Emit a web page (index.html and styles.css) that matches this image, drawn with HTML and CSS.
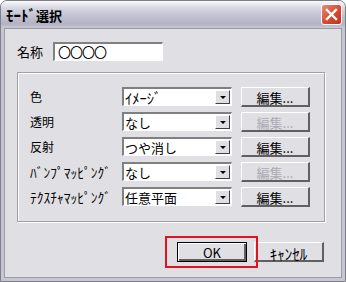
FILE: index.html
```html
<!DOCTYPE html>
<html lang="ja">
<head>
  <meta charset="UTF-8" />
  <title>ﾓｰﾄﾞ選択</title>
  <link rel="stylesheet" href="styles.css">
</head>
<body>
  <div class="window">
    <div class="titlebar">
      <span class="title"><span class="kana">ﾓｰﾄﾞ</span>選択</span>
      <span class="close">
        <svg width="13" height="13" viewBox="0 0 13 13"><path d="M2 2 L11 11 M11 2 L2 11" stroke="#fff" stroke-width="2.4" stroke-linecap="square"/></svg>
      </span>
    </div>

    <div class="client">
      <div class="name-row">
        <label>名称</label>
        <div class="textbox">〇〇〇〇</div>
      </div>

      <div class="group">
        <div class="row">
          <span class="label">色</span>
          <div class="combo"><span class="value kana">ｲﾒｰｼﾞ</span><span class="arrow"></span></div>
          <button class="btn">編集...</button>
        </div>
        <div class="row">
          <span class="label">透明</span>
          <div class="combo"><span class="value">なし</span><span class="arrow"></span></div>
          <button class="btn disabled">編集...</button>
        </div>
        <div class="row">
          <span class="label">反射</span>
          <div class="combo"><span class="value">つや消し</span><span class="arrow"></span></div>
          <button class="btn">編集...</button>
        </div>
        <div class="row">
          <span class="label kana">ﾊﾞﾝﾌﾟﾏｯﾋﾟﾝｸﾞ</span>
          <div class="combo"><span class="value">なし</span><span class="arrow"></span></div>
          <button class="btn disabled">編集...</button>
        </div>
        <div class="row">
          <span class="label kana">ﾃｸｽﾁｬﾏｯﾋﾟﾝｸﾞ</span>
          <div class="combo"><span class="value">任意平面</span><span class="arrow"></span></div>
          <button class="btn">編集...</button>
        </div>
      </div>

      <div class="footer">
        <button class="btn wide ok">OK</button>
        <button class="btn wide"><span class="kana">ｷｬﾝｾﾙ</span></button>
      </div>
    </div>
  </div>
</body>
</html>
```

FILE: styles.css
```css
body {
  margin: 0;
  background: #ffffff;
  font-family: "Noto Sans CJK JP", "DejaVu Sans", sans-serif;
  font-size: 12px;
  color: #000;
}
.window {
  width: 346px;
  height: 282px;
  box-sizing: border-box;
  background: #c6c5d0;
  border: 1px solid #7f7e8e;
  border-radius: 7px 7px 0 0;
  display: flex;
  flex-direction: column;
  overflow: hidden;
}
.titlebar {
  height: 27px;
  flex: none;
  display: flex;
  align-items: center;
  justify-content: space-between;
  padding: 0 3px 0 5px;
  background: linear-gradient(#fbfbfc 0%, #d8d8e2 25%, #bfbfcf 60%, #b2b2c4 85%, #cacad6 100%);
}
.title {
  font-weight: bold;
  font-size: 13px;
  color: #000;
}
.kana {
  font-size: 14px;
}
.title .kana {
  font-size: 15px;
}
.close {
  width: 21px;
  height: 21px;
  box-sizing: border-box;
  border: 1px solid #fff;
  border-radius: 3px;
  background: linear-gradient(135deg, #ec8a78, #d9472f 55%, #bd3422);
  display: flex;
  align-items: center;
  justify-content: center;
}
.client {
  flex: 1;
  margin: 0 3px 3px 3px;
  background: #e0dfe3;
  border: 1px solid #9c9ba8;
  padding: 13px 16px 0 12px;
  display: flex;
  flex-direction: column;
}
.name-row {
  display: flex;
  align-items: center;
}
.name-row label {
  width: 36px;
  font-size: 13px;
}
.textbox {
  width: 110px;
  height: 19px;
  box-sizing: border-box;
  background: #fff;
  border-style: solid;
  border-width: 2px 1px 1px 2px;
  border-color: #808080 #ffffff #ffffff #808080;
  font-size: 13px;
  line-height: 16px;
  padding-left: 3px;
  letter-spacing: -1px;
}
.group {
  margin-top: 11px;
  width: 308px;
  height: 150px;
  box-sizing: border-box;
  border: 1px solid #a0a0a0;
  box-shadow: inset 1px 1px 0 #fff, 1px 1px 0 #fff;
  padding: 14px 0 0 12px;
  display: flex;
  flex-direction: column;
  gap: 6px;
}
.row {
  display: flex;
  align-items: center;
  height: 19px;
}
.label {
  width: 92px;
  flex: none;
  font-size: 12px;
  white-space: nowrap;
}
.label.kana {
  font-size: 13.5px;
}
.combo {
  width: 110px;
  height: 19px;
  flex: none;
  box-sizing: border-box;
  background: #fff;
  border-style: solid;
  border-width: 2px 1px 1px 2px;
  border-color: #808080 #ffffff #ffffff #808080;
  display: flex;
  align-items: center;
  justify-content: space-between;
}
.value {
  font-size: 13px;
  padding-left: 1px;
}
.value.kana {
  font-size: 14.5px;
}
.arrow {
  width: 15px;
  height: 14px;
  margin-right: 1px;
  box-sizing: border-box;
  background: #e0dfe3;
  border-style: solid;
  border-width: 1px;
  border-color: #ffffff #404040 #404040 #ffffff;
  display: flex;
  align-items: center;
  justify-content: center;
}
.arrow::before {
  content: "";
  border-left: 3px solid transparent;
  border-right: 3px solid transparent;
  border-top: 3px solid #000;
}
.btn {
  font-family: inherit;
  font-size: 13px;
  width: 69px;
  height: 20px;
  margin-left: 9px;
  padding: 0;
  box-sizing: border-box;
  background: #e0dfe3;
  color: #000;
  border-style: solid;
  border-width: 1px 2px 2px 1px;
  border-color: #ffffff #606060 #606060 #ffffff;
}
.btn.disabled {
  color: #acaab4;
}
.btn .kana {
  font-size: 15px;
}
.footer {
  margin-top: 20px;
  display: flex;
  justify-content: flex-end;
  gap: 7px;
  padding-right: 1px;
}
.btn.wide {
  width: 70px;
  margin-left: 0;
}
.ok {
  position: relative;
  border-color: #000;
  border-width: 1px;
  box-shadow: inset 1px 1px 0 #fff, inset -2px -2px 0 #606060;
}
.ok::after {
  content: "";
  position: absolute;
  left: -13px;
  right: -12px;
  top: -7px;
  bottom: -7px;
  border: 2px solid #e0141e;
}
```
